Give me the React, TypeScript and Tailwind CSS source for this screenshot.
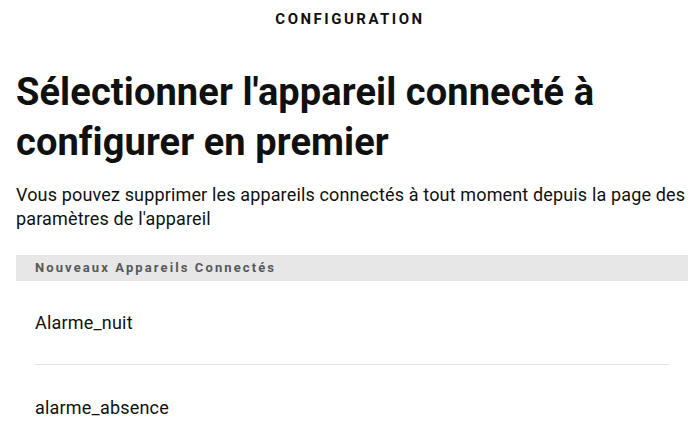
const devices = ["Alarme_nuit", "alarme_absence"];

export default function App() {
  return (
    <div className="h-[436px] w-[700px] overflow-hidden bg-white text-[#0f1111] font-['Roboto','Liberation_Sans',sans-serif]">
      {/* Header */}
      <header className="flex h-[38px] items-center justify-center">
        <span className="text-[15px] font-bold tracking-[2.5px]">CONFIGURATION</span>
      </header>

      <main className="pl-4 pr-3">
        <h1 className="mt-[29px] text-[38px] font-bold leading-[50px] tracking-[0.1px]">
          Sélectionner l'appareil connecté à configurer en premier
        </h1>

        <p className="-mr-3 mt-4 text-[18px] leading-[24px] tracking-[0.15px]">
          Vous pouvez supprimer les appareils connectés à tout moment depuis la page des paramètres de l'appareil
        </p>

        {/* Section */}
        <div className="mt-6 flex h-[26px] items-center bg-[#e7e7e7] px-[19px]">
          <span className="text-[13px] font-bold tracking-[2.1px] text-[#565959]">
            Nouveaux Appareils Connectés
          </span>
        </div>

        <ul className="px-[19px]">
          {devices.map((name, i) => (
            <li
              key={name}
              className={`flex h-[84px] items-center text-[18px] tracking-[0.2px] ${i < devices.length - 1 ? "border-b border-[#e3e3e3]" : ""}`}
            >
              {name}
            </li>
          ))}
        </ul>
      </main>
    </div>
  );
}
